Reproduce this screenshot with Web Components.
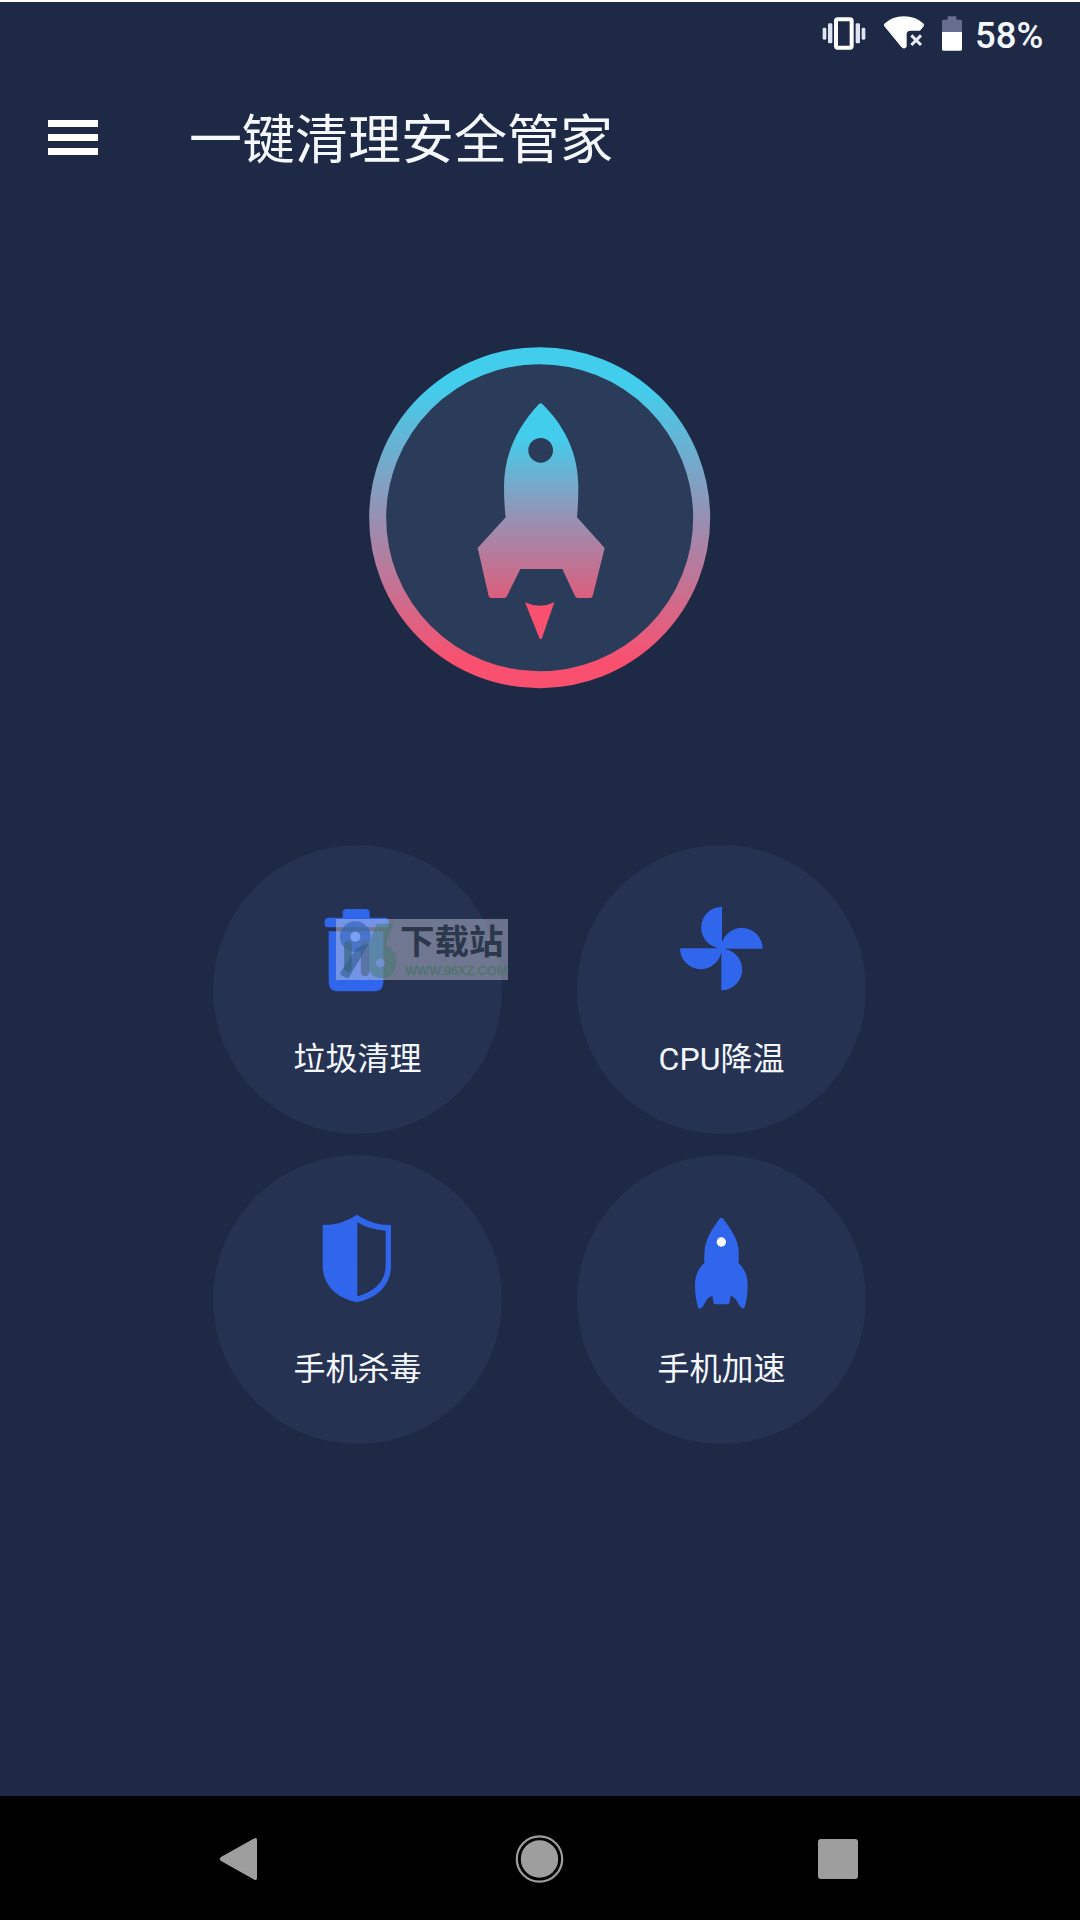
<!DOCTYPE html>
<html lang="zh-CN">
<head>
<meta charset="UTF-8">
<meta name="viewport" content="width=device-width, initial-scale=1.0">
<title>一键清理安全管家</title>
<style>
  body {
    margin: 0;
    background: #1e2945;
    color: #f5f8ff;
    font-family: Roboto, "Noto Sans CJK SC", sans-serif;
  }
</style>
</head>
<body>
<cleaner-app>
  <status-bar slot="top" battery="58%"></status-bar>
  <app-header slot="top">一键清理安全管家</app-header>
  <boost-logo></boost-logo>
  <tool-grid>
    <tool-tile icon="trash">垃圾清理</tool-tile>
    <tool-tile icon="fan">CPU降温</tool-tile>
    <tool-tile icon="shield">手机杀毒</tool-tile>
    <tool-tile icon="rocket">手机加速</tool-tile>
    <site-mark slot="overlay" site="WWW.96XZ.COM">下载站</site-mark>
  </tool-grid>
  <nav-bar slot="bottom"></nav-bar>
</cleaner-app>

<script>
class CleanerApp extends HTMLElement {
  constructor() {
    super();
    this.attachShadow({ mode: "open" });
    this.shadowRoot.innerHTML = `
      <style>
        :host {
          display: flex;
          flex-direction: column;
          box-sizing: border-box;
          height: 1920px;
          width: 1080px;
          overflow: hidden;
          border-top: 2px solid #fff;
        }
        main {
          flex: 1;
          display: flex;
          flex-direction: column;
          align-items: center;
          padding-top: 147px;
          padding-right: 1px;
          gap: 156px;
        }
      </style>
      <slot name="top"></slot>
      <main><slot></slot></main>
      <slot name="bottom"></slot>
    `;
  }
}

class StatusBar extends HTMLElement {
  constructor() {
    super();
    this.attachShadow({ mode: "open" });
    this.shadowRoot.innerHTML = `
      <style>
        :host {
          display: flex;
          align-items: center;
          justify-content: flex-end;
          height: 64px;
          padding-right: 35px;
        }
        svg {
          display: block;
          width: 160px;
          height: 64px;
        }
        span {
          width: 70px;
          font-size: 36.5px;
          font-weight: 500;
          line-height: 64px;
          white-space: nowrap;
          padding-top: 4px;
        }
      </style>
      <svg viewBox="105 5 480 192">
        <!-- vibrate -->
        <rect x="168" y="57" width="47" height="85" rx="5" fill="none" stroke="#fff" stroke-width="12"/>
        <g fill="#dfe4f2">
          <rect x="144" y="69" width="13" height="60" rx="4"/>
          <rect x="128" y="82" width="11" height="36" rx="4"/>
          <rect x="227" y="69" width="13" height="60" rx="4"/>
          <rect x="245" y="82" width="11" height="36" rx="4"/>
        </g>
        <!-- wifi without connection -->
        <path fill="#fff" d="M313 70Q338 48 371 48Q407 48 431 70Q433 74 431 78L420 91H391Q380 91 380 102V139Q373 149 364 140L313 78Q310 74 313 70Z"/>
        <path d="M394 105L423 134M423 105L394 134" stroke="#e8ebf5" stroke-width="9" fill="none"/>
        <!-- battery -->
        <path fill="#666d8e" d="M503 48H529V58H542Q546 58 546 62V96H486V62Q486 58 490 58H503Z"/>
        <path fill="#fff" d="M486 95H546V147Q546 151 542 151H490Q486 151 486 147Z"/>
      </svg>
      <span></span>
    `;
  }

  connectedCallback() {
    this.shadowRoot.querySelector("span").textContent = this.getAttribute("battery");
  }
}

class AppHeader extends HTMLElement {
  constructor() {
    super();
    this.attachShadow({ mode: "open" });
    this.shadowRoot.innerHTML = `
      <style>
        :host {
          display: flex;
          align-items: center;
          gap: 91px;
          height: 134px;
          padding-left: 48px;
        }
        .menu {
          display: flex;
          flex-direction: column;
          gap: 7px;
          width: 50px;
          padding-top: 9px;
        }
        .menu i {
          height: 7px;
          background: #fff;
        }
        h1 {
          margin: 0;
          padding-top: 16px;
          font-size: 53px;
          font-weight: 400;
          line-height: 70px;
          white-space: nowrap;
        }
      </style>
      <div class="menu"><i></i><i></i><i></i></div>
      <h1><slot></slot></h1>
    `;
  }
}

class BoostLogo extends HTMLElement {
  constructor() {
    super();
    this.attachShadow({ mode: "open" });
    this.shadowRoot.innerHTML = `
      <style>
        :host {
          display: block;
          width: 342px;
          height: 342px;
        }
        svg {
          display: block;
          width: 100%;
          height: 100%;
        }
      </style>
      <svg viewBox="57 51 1026 1026">
        <defs>
          <linearGradient id="ring" gradientUnits="userSpaceOnUse" x1="0" y1="50" x2="0" y2="1076">
            <stop offset=".12" stop-color="#43cdec"/>
            <stop offset=".5" stop-color="#9790b3"/>
            <stop offset=".92" stop-color="#f9506f"/>
          </linearGradient>
          <linearGradient id="ship" gradientUnits="userSpaceOnUse" x1="0" y1="220" x2="0" y2="930">
            <stop offset=".14" stop-color="#43cdec"/>
            <stop offset=".47" stop-color="#9494b6"/>
            <stop offset=".92" stop-color="#f04f6d"/>
          </linearGradient>
        </defs>
        <circle cx="569" cy="563" r="486" fill="#2b3b5a" stroke="url(#ring)" stroke-width="51"/>
        <path fill="url(#ship)" fill-rule="evenodd" d="M567 222Q572 217 577 222C643 287 685 370 685 470Q685 520 681 562L764 654L728 798Q726 804 720 804H683Q678 804 675 798L637 717H511L471 798Q468 804 462 804H424Q418 804 416 798L383 654L467 562Q462 520 462 470C462 370 505 287 567 222ZM572 324A37 37 0 1 0 572 398A37 37 0 1 0 572 324Z"/>
        <path fill="#f9506f" d="M525 817Q570 838 613 817L576 924Q572 931 568 924Z"/>
      </svg>
    `;
  }
}

class ToolGrid extends HTMLElement {
  constructor() {
    super();
    this.attachShadow({ mode: "open" });
    this.shadowRoot.innerHTML = `
      <style>
        :host {
          display: grid;
          grid-template-columns: 289px 289px;
          gap: 21px 75px;
          position: relative;
        }
        /* the site mark lies over the first tile */
        ::slotted([slot="overlay"]) {
          position: absolute;
          left: 123px;
          top: 74px;
        }
      </style>
      <slot></slot>
      <slot name="overlay"></slot>
    `;
  }
}

const ICONS = {
  trash: `
    <svg viewBox="339 209 270 300">
      <path d="M440 236H497Q509 236 509 248V262H553Q566 262 566 274V282Q566 291 556 291H384Q374 291 374 281V274Q374 262 387 262H428V248Q428 236 440 236Z"/>
      <path d="M386 303H550V456Q550 483 523 483H413Q386 483 386 456Z"/>
    </svg>`,
  fan: `
    <svg viewBox="111 58 270 300">
      <path d="M246 78A62.500 62.500 0 0 0 246 203Z"/>
      <path d="M368 204A62.500 62.500 0 0 0 243 204Z"/>
      <path d="M244 329A62.500 62.500 0 0 0 244 204Z"/>
      <path d="M120 203A62.500 62.500 0 0 0 245 203Z"/>
      <circle cx="245" cy="203" r="14"/>
    </svg>`,
  shield: `
    <svg viewBox="99 60 270 300">
      <path fill-rule="evenodd" d="M231 74Q276 105 333 105V226C333 286 292 324 231 337C170 324 128 286 128 226V105Q186 105 231 74ZM232 97V319C285 304 317 274 317 226V122Q270 120 232 97Z"/>
    </svg>`,
  rocket: `
    <svg viewBox="111 59 270 300">
      <path d="M238 86Q244 78 250 86C275 118 294 150 296 180Q297 200 295 218C313 234 323 255 323 285Q323 322 314 351Q311 357 305 353C295 345 291 321 272 317L268 338Q267 342 262 342H227Q222 342 221 338L217 317C198 321 194 345 184 353Q177 357 174 351Q165 322 165 285C165 255 175 234 193 218Q192 200 194 180C196 150 214 118 238 86Z"/>
      <circle cx="244" cy="155" r="14" fill="#fff"/>
    </svg>`,
};

class ToolTile extends HTMLElement {
  constructor() {
    super();
    this.attachShadow({ mode: "open" });
    this.shadowRoot.innerHTML = `
      <style>
        :host {
          display: flex;
          flex-direction: column;
          align-items: center;
          box-sizing: border-box;
          width: 289px;
          height: 289px;
          padding-top: 55px;
          border-radius: 50%;
          background: #253251;
        }
        .icon svg {
          display: block;
          width: 90px;
          height: 100px;
          fill: #3066ec;
        }
        .label {
          margin-top: 37px;
          font-size: 32px;
          line-height: 44px;
          white-space: nowrap;
        }
      </style>
      <div class="icon"></div>
      <div class="label"><slot></slot></div>
    `;
  }

  connectedCallback() {
    this.shadowRoot.querySelector(".icon").innerHTML = ICONS[this.getAttribute("icon")];
  }
}

class SiteMark extends HTMLElement {
  constructor() {
    super();
    this.attachShadow({ mode: "open" });
    this.shadowRoot.innerHTML = `
      <style>
        :host {
          display: flex;
          width: 172px;
          height: 61px;
          background: rgba(205, 205, 225, 0.45);
        }
        svg {
          flex: none;
          width: 64px;
          height: 61px;
        }
        .text {
          display: flex;
          flex-direction: column;
          white-space: nowrap;
        }
        .name {
          height: 44px;
          font-size: 34.5px;
          font-weight: 700;
          line-height: 46px;
          color: #2b374b;
        }
        .url {
          padding-left: 5px;
          font-family: "Liberation Sans", Arial, sans-serif;
          font-size: 12.7px;
          line-height: 17px;
          color: #527570;
          -webkit-text-stroke: 0.5px #527570;
        }
      </style>
      <svg viewBox="48 57 192 183">
        <!-- 6 -->
        <path d="M171 71H224Q202 100 198 137Q230 149 230 185Q226 233 185 235Q145 232 142 190C142 140 155 105 171 71Z" fill="#3f776c" fill-opacity=".5"/>
        <circle cx="181" cy="189" r="13" fill="#7290cf"/>
        <!-- 9 -->
        <circle cx="106" cy="110" r="46" fill="#2a61b5" fill-opacity=".6"/>
        <path d="M84 135V205" fill="none" stroke="#3e6a88" stroke-opacity=".8" stroke-width="23" stroke-linecap="round"/>
        <path d="M135 135V216" fill="none" stroke="#566f9c" stroke-opacity=".85" stroke-width="25" stroke-linecap="round"/>
        <path d="M148 130L88 230Q84 236 78 233L64 226Q58 222 62 216L110 144Z" fill="#315d8c" fill-opacity=".6"/>
        <circle cx="106" cy="110" r="15" fill="#7ca0f2"/>
      </svg>
      <div class="text">
        <div class="name"><slot></slot></div>
        <div class="url"></div>
      </div>
    `;
  }

  connectedCallback() {
    this.shadowRoot.querySelector(".url").textContent = this.getAttribute("site");
  }
}

class NavBar extends HTMLElement {
  constructor() {
    super();
    this.attachShadow({ mode: "open" });
    this.shadowRoot.innerHTML = `
      <style>
        :host {
          display: flex;
          align-items: center;
          justify-content: space-between;
          box-sizing: border-box;
          height: 124px;
          padding: 2px 217px 0 214px;
          background: #000;
        }
        svg {
          width: 50px;
          height: 50px;
          fill: #9e9e9e;
        }
      </style>
      <svg viewBox="0 0 50 50"><path d="M7 23L40 4.500Q43 3 43 6V44Q43 47 40 45.500L7 27Q4.500 25 7 23Z"/></svg>
      <svg viewBox="0 0 50 50">
        <circle cx="25.500" cy="25" r="22.700" fill="none" stroke="#9e9e9e" stroke-width="2.200"/>
        <circle cx="25.500" cy="25" r="18.700"/>
      </svg>
      <svg viewBox="0 0 50 50"><rect x="5" y="5" width="40" height="40" rx="3"/></svg>
    `;
  }
}

customElements.define("cleaner-app", CleanerApp);
customElements.define("status-bar", StatusBar);
customElements.define("app-header", AppHeader);
customElements.define("boost-logo", BoostLogo);
customElements.define("tool-grid", ToolGrid);
customElements.define("tool-tile", ToolTile);
customElements.define("site-mark", SiteMark);
customElements.define("nav-bar", NavBar);
</script>
</body>
</html>
